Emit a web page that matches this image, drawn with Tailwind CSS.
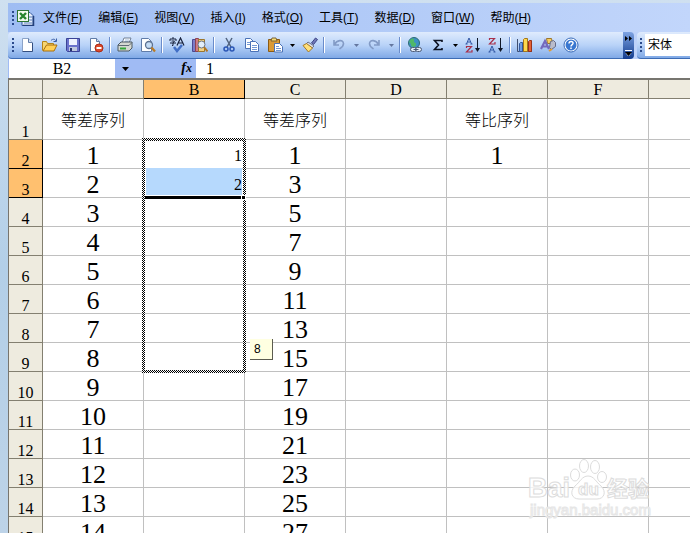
<!DOCTYPE html>
<html lang="zh-CN">
<head>
    <meta charset="UTF-8">
    <meta name="viewport" content="width=device-width, initial-scale=1.0">
    <title>Microsoft Excel</title>
    <script src="https://cdn.jsdelivr.net/npm/@tailwindcss/browser@4"></script>
</head>
<body class="bg-white text-black">

    <div class="flex h-screen overflow-hidden bg-linear-to-b from-[#cfe0f0] via-[#b3cfe8] to-[#bdd3e8] font-['Liberation_Sans','Noto_Sans_CJK_SC',sans-serif]">
        <div class="w-2 shrink-0"></div>

        <div class="flex min-w-0 flex-1 flex-col pt-[3px]">
            <!-- menu bar -->
            <nav class="flex h-[29px] shrink-0 items-center bg-linear-to-r from-[#9fbdf3] to-[#c2d6fb] pl-1 text-xs">
                <svg class="h-4 w-6 shrink-0" viewBox="0 0 24 16">
                    <path d="M1 1v2M1 5v2M1 9v2M1 13v2" stroke="#2a4a8c" stroke-width="2"/>
                    <path d="M10 2.500h8l3 3v10H10z" fill="#e8effb" stroke="#31569c"/>
                    <path d="M21.500 6v9.500H11" fill="none" stroke="#23407c" stroke-width="1.500"/>
                    <path d="M17 7h3M17 10h3M12 13h8" stroke="#5d80bd"/>
                    <rect x="5.500" y=".5" width="11" height="11" fill="#f3fbee" stroke="#2d7433"/>
                    <path d="M8 3l6 6M14 3L8 9" stroke="#27852d" stroke-width="2.400"/>
                </svg>
                <div class="flex pl-[7px] whitespace-nowrap">
                    <button class="mr-4">文件(<u>F</u>)</button>
                    <button class="mr-4">编辑(<u>E</u>)</button>
                    <button class="mr-4">视图(<u>V</u>)</button>
                    <button class="mr-4">插入(<u>I</u>)</button>
                    <button class="mr-4">格式(<u>O</u>)</button>
                    <button class="mr-4">工具(<u>T</u>)</button>
                    <button class="mr-4">数据(<u>D</u>)</button>
                    <button class="mr-4">窗口(<u>W</u>)</button>
                    <button>帮助(<u>H</u>)</button>
                </div>
            </nav>

            <!-- toolbars -->
            <div class="flex h-[27px] shrink-0 bg-[#bdd2fa]">
                <div class="flex min-w-0 flex-1 items-center overflow-hidden rounded-l-sm border-b border-[#3d6cb4] bg-linear-to-b from-[#dfebfd] via-[#b9d3f8] to-[#80a9e6] pl-1">
                    <svg class="h-4 w-[3px] shrink-0" viewBox="0 0 3 16"><path d="M1 1v2M1 5v2M1 9v2M1 13v2" stroke="#2a4a8c" stroke-width="2"/></svg>
                    <button aria-label="新建" class="flex w-[23px] shrink-0 justify-center"><svg class="size-4" viewBox="0 0 16 16"><path d="M3.500 1.500h6l4 4v9h-10z" fill="#fff" stroke="#8ba3c8"/><path d="M9.500 1.500v4h4" fill="#cfdcf0" stroke="#607ca8"/><path d="M13.500 6v8.500h-10" fill="none" stroke="#344f80"/></svg></button>
                    <button aria-label="打开" class="flex w-[23px] shrink-0 justify-center"><svg class="size-4" viewBox="0 0 16 16"><path d="M.5 13.500v-9h4l1 2h6v2" fill="#f6d673" stroke="#b58418"/><path d="M1 14l3.500-6H15l-3 6z" fill="#ffcf55" stroke="#a86f0c"/><path d="M9 3.500c2-2 4-1.500 5 .5M14.500 1.500v3h-3" fill="none" stroke="#3b5ea6"/></svg></button>
                    <button aria-label="保存" class="flex w-[23px] shrink-0 justify-center"><svg class="size-4" viewBox="0 0 16 16"><path d="M1.500 1.500h13v13h-12l-1-1z" fill="#6a72cc" stroke="#3b4396"/><path d="M4 2h8v6H4z" fill="#eef2ff"/><path d="M4 10h8v4H4z" fill="#bfc8df"/><path d="M5 11h2v3H5z" fill="#26336f"/></svg></button>
                    <button aria-label="权限" class="flex w-[23px] shrink-0 justify-center"><svg class="size-4" viewBox="0 0 16 16"><path d="M2.500 1.500h6l3 3v10h-9z" fill="#fff" stroke="#607ca8"/><path d="M8.500 1.500v3h3" fill="#cfdcf0" stroke="#607ca8"/><circle cx="11" cy="11" r="4" fill="#dc4a2c" stroke="#ab2c16"/><path d="M8.500 11h5" stroke="#fff" stroke-width="2"/></svg></button>
                    <span class="mx-[2px] h-4 w-[2px] shrink-0 border-r border-white bg-[#6a8ccb]"></span>
                    <button aria-label="打印" class="flex w-[23px] shrink-0 justify-center"><svg class="size-4" viewBox="0 0 16 16"><path d="M5 6l2-5h7l-2 5z" fill="#fff" stroke="#6f7f96"/><path d="M8 3h4M7.500 4.500h4" stroke="#7da0cf" stroke-width=".7"/><path d="M1 8l3-3h11v6l-3 3H1z" fill="#d5d9d2" stroke="#4d5a63"/><path d="M1 8.500h11l3-3" fill="none" stroke="#5f6b74"/><path d="M3 11.500h6" stroke="#36a83a" stroke-width="2"/></svg></button>
                    <button aria-label="打印预览" class="flex w-[23px] shrink-0 justify-center"><svg class="size-4" viewBox="0 0 16 16"><path d="M1.500 1.500h7l3 3v10h-10z" fill="#fff" stroke="#607ca8"/><circle cx="9" cy="8" r="3.500" fill="#c5dcf4" stroke="#5d7190" stroke-width="1.300"/><path d="M11.500 10.500l3.500 4" stroke="#ba7b24" stroke-width="2.200"/></svg></button>
                    <span class="mx-[2px] h-4 w-[2px] shrink-0 border-r border-white bg-[#6a8ccb]"></span>
                    <button aria-label="拼写检查" class="flex w-[23px] shrink-0 justify-center"><svg class="size-4" viewBox="0 0 16 16"><path d="M4 0v2M1 4V2h6v2M2.500 4h3l-1.500 2v2.500H3M1 6h6" fill="none" stroke="#17213c"/><path d="M8 8.500L11.500 1 15 8.500M9.500 6h4" fill="none" stroke="#17213c" stroke-width="1.200"/><path d="M5 10l3 4 5-6" fill="none" stroke="#416fc6" stroke-width="2.500"/></svg></button>
                    <button aria-label="信息检索" class="flex w-[23px] shrink-0 justify-center"><svg class="size-4" viewBox="0 0 16 16"><path d="M.5 2.500h3v12h-3z" fill="#7c7cc8" stroke="#4a4a93"/><path d="M3.500 1.500h3v13h-3z" fill="#cf7c86" stroke="#8e4351"/><path d="M6.500 2.500h6v12h-6z" fill="#f1d184" stroke="#9c762d"/><circle cx="9.500" cy="7.500" r="3.500" fill="#e2eefa" stroke="#6b7484"/><path d="M12 10l3.500 4.500" stroke="#b17521" stroke-width="2"/></svg></button>
                    <span class="mx-[2px] h-4 w-[2px] shrink-0 border-r border-white bg-[#6a8ccb]"></span>
                    <button aria-label="剪切" class="flex w-[23px] shrink-0 justify-center"><svg class="size-4" viewBox="0 0 16 16"><path d="M5 1l5 9M11 1l-5 9" stroke="#52647f" stroke-width="1.500"/><circle cx="5" cy="12" r="2" fill="none" stroke="#2a56b5" stroke-width="1.500"/><circle cx="11" cy="12" r="2" fill="none" stroke="#2a56b5" stroke-width="1.500"/></svg></button>
                    <button aria-label="复制" class="flex w-[23px] shrink-0 justify-center"><svg class="size-4" viewBox="0 0 16 16"><path d="M1.500 1.500h5l3 3v7h-8z" fill="#fff" stroke="#4b72b6"/><path d="M3 5.500h4M3 7.500h4" stroke="#7398d4"/><path d="M6.500 4.500h5l3 3v7h-8z" fill="#fff" stroke="#4b72b6"/><path d="M8 8.500h5M8 10.500h5M8 12.500h5" stroke="#7398d4"/></svg></button>
                    <button aria-label="粘贴" class="flex w-[23px] shrink-0 justify-center"><svg class="size-4" viewBox="0 0 16 16"><path d="M1.500 2.500h11v12h-11z" fill="#d99a37" stroke="#8b5b14"/><path d="M4 4l1-3h4l1 3z" fill="#f6dc76" stroke="#7a6337"/><path d="M7.500 6.500h5l3 3v5.500h-8z" fill="#fff" stroke="#4b72b6"/><path d="M9 9.500h3M9 11.500h5M9 13.500h5" stroke="#7398d4"/></svg></button>
                    <button aria-label="粘贴选项" class="flex w-3 shrink-0 justify-center"><svg class="h-[3px] w-[5px]" viewBox="0 0 5 3"><path d="M0 0h5L2.500 3z"/></svg></button>
                    <button aria-label="格式刷" class="flex w-[23px] shrink-0 justify-center"><svg class="size-4" viewBox="0 0 16 16"><path d="M9.500 6l4-5 2 1.500-4 5z" fill="#7078b8" stroke="#3c4585"/><path d="M6 5l6 4-2 2-6-4z" fill="#d8dce8" stroke="#6b7390"/><path d="M4.500 6.500l6 4.500-4 4L1 8.500z" fill="#ffe07a" stroke="#a57824"/></svg></button>
                    <span class="mx-[2px] h-4 w-[2px] shrink-0 border-r border-white bg-[#6a8ccb]"></span>
                    <button aria-label="撤消" class="flex w-[23px] shrink-0 justify-center"><svg class="size-4" viewBox="0 0 16 16"><path d="M3 3v5h5M3.500 7.500C6 3 12 2 12.500 6.500c0 3-2 4-4 5.500" fill="none" stroke="#839bc6" stroke-width="1.600"/></svg></button>
                    <button aria-label="撤消选项" class="flex w-3 shrink-0 justify-center"><svg class="h-[3px] w-[5px]" viewBox="0 0 5 3"><path d="M0 0h5L2.500 3z" fill="#64779f"/></svg></button>
                    <button aria-label="恢复" class="flex w-[23px] shrink-0 justify-center"><svg class="size-4" viewBox="0 0 16 16"><path d="M13 3v5H8M12.500 7.500C10 3 4 2 3.500 6.500c0 3 2 4 4 5.500" fill="none" stroke="#839bc6" stroke-width="1.600"/></svg></button>
                    <button aria-label="恢复选项" class="flex w-3 shrink-0 justify-center"><svg class="h-[3px] w-[5px]" viewBox="0 0 5 3"><path d="M0 0h5L2.500 3z" fill="#64779f"/></svg></button>
                    <span class="mx-[2px] h-4 w-[2px] shrink-0 border-r border-white bg-[#6a8ccb]"></span>
                    <button aria-label="超链接" class="flex w-[23px] shrink-0 justify-center"><svg class="size-4" viewBox="0 0 16 16"><circle cx="7" cy="6" r="5.500" fill="#3d8fc4" stroke="#2b6a75"/><path d="M3 3c3-3 5-1 4 1s3 1 2 4-5 2-5 0-3-2-1-5z" fill="#4fb868"/><rect x="3.500" y="10.500" width="6" height="4" rx="2" fill="#e3eaf5" stroke="#4c5a77"/><rect x="8.500" y="10.500" width="6" height="4" rx="2" fill="#e3eaf5" stroke="#4c5a77"/><path d="M6.500 12.500h5" stroke="#4c5a77"/></svg></button>
                    <button aria-label="自动求和" class="flex w-[23px] shrink-0 justify-center"><svg class="size-4" viewBox="0 0 16 16"><path d="M12 5V3.500H4.500L8.500 8l-4 4.500H12V11" fill="none" stroke="#0b1020" stroke-width="1.600"/></svg></button>
                    <button aria-label="求和选项" class="flex w-3 shrink-0 justify-center"><svg class="h-[3px] w-[5px]" viewBox="0 0 5 3"><path d="M0 0h5L2.500 3z"/></svg></button>
                    <button aria-label="升序排序" class="flex w-[23px] shrink-0 justify-center"><svg class="size-4" viewBox="0 0 16 16"><path d="M1.500 7L4 1l2.500 6M2.500 5h3M.5 7h2M5.500 7h2" fill="none" stroke="#3156a3"/><path d="M1.500 11V9.500h5L1.500 15h5.500v-2" fill="none" stroke="#a8304a" stroke-width="1.200"/><path d="M12.500 1v12" stroke="#101828"/><path d="M10 11h5l-2.500 4z" fill="#101828"/></svg></button>
                    <button aria-label="降序排序" class="flex w-[23px] shrink-0 justify-center"><svg class="size-4" viewBox="0 0 16 16"><path d="M1.500 3V1.500h5L1.500 7h5.500V5" fill="none" stroke="#a8304a" stroke-width="1.200"/><path d="M1.500 15L4 9l2.500 6M2.500 13h3M.5 15h2M5.500 15h2" fill="none" stroke="#3156a3"/><path d="M12.500 1v12" stroke="#101828"/><path d="M10 11h5l-2.500 4z" fill="#101828"/></svg></button>
                    <span class="mx-[2px] h-4 w-[2px] shrink-0 border-r border-white bg-[#6a8ccb]"></span>
                    <button aria-label="图表向导" class="flex w-[23px] shrink-0 justify-center"><svg class="size-4" viewBox="0 0 16 16"><path d="M.5 2v12.500H15" fill="none" stroke="#3f4f70"/><path d="M2.500 6.500l1-1h2v9h-3z" fill="#6e9ae0" stroke="#345a9f"/><path d="M6.500 2.500l1-1h3v13h-4z" fill="#ffd84e" stroke="#a4761a"/><path d="M11.500 4.500l1-1h2v11h-3z" fill="#e56236" stroke="#98331b"/></svg></button>
                    <button aria-label="绘图" class="flex w-[23px] shrink-0 justify-center"><svg class="size-4" viewBox="0 0 16 16"><path d="M6.500 1.500h5l1 5h-5z" fill="#f7cf61" stroke="#9c762d"/><path d="M10.500 4.500l3-1 2 2v4l-4 3-2-2z" fill="#b9bccb" stroke="#666d88"/><path d="M1 12l4-8 4 8M2.500 9.500h5" fill="none" stroke="#7469bd" stroke-width="2.200"/><path d="M9 14l3-2" stroke="#df9c33" stroke-width="2"/></svg></button>
                    <button aria-label="帮助" class="flex w-[23px] shrink-0 justify-center"><svg class="size-4" viewBox="0 0 16 16"><circle cx="8" cy="8" r="7" fill="#fff" stroke="#3669b8"/><circle cx="8" cy="8" r="5.500" fill="#3977d0"/><path d="M6 6.500c0-3 4.500-2.500 4 0C9.800 7.700 8 7.600 8 9.500M8 10.500V12" fill="none" stroke="#fff" stroke-width="1.500"/></svg></button>
                </div>
                <button aria-label="工具栏选项" class="flex w-[11px] shrink-0 flex-col items-center justify-between rounded-r-sm bg-linear-to-b from-[#7ea3e2] to-[#123c8f] pt-1 pb-[3px]">
                    <svg class="h-[5px] w-[7px]" viewBox="0 0 7 5"><path d="M0 0l3 2.500L0 5zM4 0l3 2.500L4 5z"/></svg>
                    <svg class="h-[6px] w-[7px]" viewBox="0 0 7 6"><path d="M0 .5h7M1 3h5L3.500 6z" stroke="#fff"/><path d="M0 2h7L3.500 6z"/></svg>
                </button>
                <div class="ml-[3px] flex w-[53px] shrink-0 items-center rounded-l-sm border-b border-[#3d6cb4] bg-linear-to-b from-[#dfebfd] via-[#b9d3f8] to-[#80a9e6] pl-[3px]">
                    <svg class="h-4 w-[3px] shrink-0" viewBox="0 0 3 16"><path d="M1 1v2M1 5v2M1 9v2M1 13v2" stroke="#2a4a8c" stroke-width="2"/></svg>
                    <select aria-label="字体" class="ml-[2px] h-[22px] min-w-0 flex-1 appearance-none bg-white pl-[3px] text-xs">
                        <option>宋体</option>
                    </select>
                </div>
            </div>

            <!-- formula bar -->
            <div class="flex h-[19px] shrink-0 bg-[#a0bbf4] pl-px font-['Liberation_Serif','Noto_Sans_CJK_SC',serif] text-base">
                <input aria-label="名称框" value="B2" class="w-[106px] bg-white text-center">
                <button aria-label="名称列表" class="flex w-5 items-center justify-center"><svg class="h-[4px] w-[7px]" viewBox="0 0 7 4"><path d="M0 0h7L3.500 4z"/></svg></button>
                <label for="formula" class="w-[61px] pr-1 text-right text-sm leading-[18px] font-bold italic">f<span class="text-xs">x</span></label>
                <input id="formula" value="1" class="min-w-0 flex-1 bg-white pl-[10px]">
            </div>

            <!-- sheet -->
            <div class="relative min-h-0 flex-1 overflow-hidden border-t-2 border-l border-[#77756f] bg-white font-['Liberation_Serif','Noto_Sans_CJK_SC',serif]">
                <table class="w-[741px] table-fixed border-separate border-spacing-0">
                    <thead>
                        <tr id="columns" class="h-[19px] text-base leading-4"></tr>
                    </thead>
                    <tbody id="rows"></tbody>
                </table>

                <svg class="absolute right-[38px] bottom-[12px] h-[64px] w-[126px]" viewBox="0 0 126 64" fill="#fff" fill-opacity=".8" stroke="#dcdcdc">
                    <ellipse cx="49" cy="18" rx="4.500" ry="6"/>
                    <ellipse cx="58" cy="9" rx="4.500" ry="6.500"/>
                    <ellipse cx="69" cy="10" rx="4.500" ry="6.500"/>
                    <ellipse cx="76" cy="20" rx="4.500" ry="5.500"/>
                    <path d="M62 19c6 0 8 6 13 10 6 6 3 13-4 13H53c-7 0-10-7-4-13 5-4 7-10 13-10z"/>
                    <text x="2" y="40" font-family="Liberation Sans" font-weight="bold" font-size="27">Bai</text>
                    <text x="52" y="38" font-family="Liberation Sans" font-weight="bold" font-size="17">du</text>
                    <text x="81" y="39" font-family="Noto Sans CJK SC" font-weight="bold" font-size="21">经验</text>
                    <text x="4" y="58" font-family="Liberation Sans" font-size="15" stroke="#e6e6e6">jingyan.baidu.com</text>
                </svg>
            </div>
        </div>
    </div>

    <script>
        const columns = ["A", "B", "C", "D", "E", "F", ""];
        const head = document.getElementById("columns");
        const body = document.getElementById("rows");

        head.innerHTML = `<th class="w-[34px] border-r border-b border-[#837f70] bg-[#eeebdf] p-0"></th>` + columns.map(name =>
            name === "B"
                ? `<th class="w-[101px] border-r border-b border-black bg-[#ffc06f] p-0 pt-0.5 font-normal">${name}</th>`
                : `<th class="w-[101px] border-r border-b border-[#837f70] bg-[#eeebdf] p-0 pt-0.5 font-normal">${name}</th>`
        ).join("");

        // dotted frame of the fill drag, eight rows tall, with the value tip beside it
        const dragFrame = `
            <svg class="absolute -top-0.5 -left-0.5 z-10 h-[235px] w-[104px]">
                <defs>
                    <pattern id="dots" width="2" height="2" patternUnits="userSpaceOnUse">
                        <rect width="2" height="2" fill="#fff"/>
                        <path d="M0 0h1v1H0zM1 1h1v1H1z" fill="#000"/>
                    </pattern>
                </defs>
                <path d="M0 0h104v235H0zM3 3v229h98V3z" fill="url(#dots)" fill-rule="evenodd" shape-rendering="crispEdges"/>
            </svg>
            <div class="absolute top-[199px] left-[106px] z-10 h-[21px] w-[23px] border-r border-b border-[#5c5c50] bg-[#ffffe1] pl-1 text-left font-['Liberation_Sans',sans-serif] text-xs leading-5">8</div>`;

        const selection = `
            <div class="absolute -top-px right-0.5 left-0.5 h-[27px] bg-[#b6d9fd]"></div>
            <div class="absolute top-[27px] right-[3px] left-px z-20 h-[3px] bg-black"></div>
            <div class="absolute top-[26px] -right-0.5 z-20 h-[5px] w-[5px] border border-white bg-black"></div>`;

        function cellContent(row, name) {
            if (name === "A") return row === 1 ? "等差序列" : row - 1;
            if (name === "C") return row === 1 ? "等差序列" : 2 * row - 3;
            if (name === "E" && row === 1) return "等比序列";
            if (name === "E" && row === 2) return 1;
            if (name === "B" && row === 2) return "1" + dragFrame;
            if (name === "B" && row === 3) return selection + `<span class="relative">2</span>`;
            return "";
        }

        for (let row = 1; row <= 15; row++) {
            const tr = document.createElement("tr");
            tr.className = row === 1 ? "h-[41px] text-base font-light" : "h-[29px] text-[26px] leading-6";
            const rowHead = row === 2 || row === 3
                ? `<th class="border-r border-b border-black bg-[#ffc06f] p-0 align-bottom text-base leading-[14px] font-normal">${row}</th>`
                : `<th class="border-r border-b border-[#837f70] bg-[#eeebdf] p-0 align-bottom text-base leading-[14px] font-normal">${row}</th>`;
            tr.innerHTML = rowHead + columns.map(name =>
                name === "B"
                    ? `<td class="relative border-r border-b border-[#c0c0c0] p-0 pr-0.5 pt-1 text-right text-base leading-6">${cellContent(row, name)}</td>`
                    : `<td class="border-r border-b border-[#c0c0c0] p-0 pt-1 text-center">${cellContent(row, name)}</td>`
            ).join("");
            body.appendChild(tr);
        }
    </script>
</body>
</html>
